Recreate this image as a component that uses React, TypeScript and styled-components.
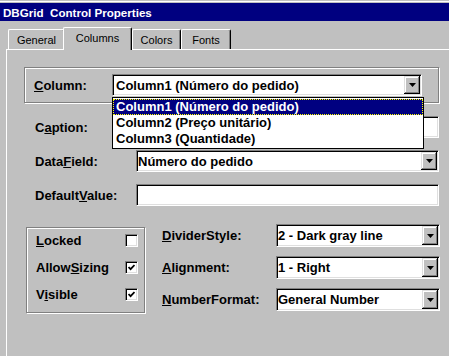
import React from 'react'
import styled, { createGlobalStyle, css } from 'styled-components'

const GlobalStyle = createGlobalStyle`
  html, body { margin: 0; padding: 0; background: #c0c0c0; }
  body { font-family: "Liberation Sans", Arial, sans-serif; color: #000; }
`

// classic 3D borders
const sunken = css`
  border: 1px solid;
  border-color: #808080 #ffffff #ffffff #808080;
  box-shadow: inset 1px 1px 0 #000000, inset -1px -1px 0 #dfdfdf;
`

const Window = styled.div`
  width: 449px;
  height: 356px;
  overflow: hidden;
  box-sizing: border-box;
  padding-top: 3px;
  display: flex;
  flex-direction: column;
  background: #c0c0c0;
  box-shadow: inset 0 1px 0 #c0c0c0, inset 0 2px 0 #ffffff;
`

const TitleBar = styled.div`
  height: 18px;
  flex-shrink: 0;
  display: flex;
  align-items: center;
  padding-left: 3px;
  background: #000080;
  color: #ffffff;
  font-weight: bold;
  font-size: 11.6px;
  white-space: pre;
`

const TabRow = styled.div`
  display: flex;
  align-items: flex-end;
  height: 22px;
  margin-top: 6px;
  padding-left: 8px;
  position: relative;
  z-index: 2;
  flex-shrink: 0;
`

const Tab = styled.div<{ $w: number; $active?: boolean }>`
  width: ${p => p.$w}px;
  height: 20px;
  box-sizing: border-box;
  display: flex;
  align-items: center;
  justify-content: center;
  font-size: 11px;
  border-top: 1px solid #ffffff;
  border-left: 1px solid #ffffff;
  border-right: 1px solid #000000;
  border-top-left-radius: 2px;
  border-top-right-radius: 2px;
  box-shadow: inset -1px 0 0 #808080;
  background: #c0c0c0;
  ${p =>
    p.$active &&
    css`
      height: 23px;
      margin-left: -2px;
      margin-bottom: -1px;
      padding-bottom: 3px;
      position: relative;
      z-index: 3;
    `}
`

const Panel = styled.div`
  flex: 1;
  width: 480px;
  margin-left: 6px;
  border-top: 1px solid #ffffff;
  border-left: 1px solid #ffffff;
  padding: 17px 0 0 17px;
`

const GroupBox = styled.div<{ $w: number; $h: number }>`
  width: ${p => p.$w}px;
  height: ${p => p.$h}px;
  box-sizing: border-box;
  border: 1px solid #808080;
  box-shadow: inset 1px 1px 0 #ffffff, 1px 1px 0 #ffffff;
`

const ColumnGroup = styled(GroupBox)`
  display: flex;
  align-items: center;
  padding-left: 9px;
`

const Label = styled.span<{ $w?: number }>`
  font-weight: bold;
  font-size: 13px;
  white-space: nowrap;
  ${p => p.$w && `width: ${p.$w}px; flex-shrink: 0;`}
`

const Key = styled.span`
  text-decoration: underline;
  text-underline-offset: 1px;
`

const Combo = styled.div<{ $w: number; $h?: number }>`
  position: relative;
  width: ${p => p.$w}px;
  height: ${p => p.$h ?? 22}px;
  box-sizing: border-box;
  ${sunken};
  background: #ffffff;
  display: flex;
  align-items: center;
  font-weight: bold;
  font-size: 13px;
`

const ComboText = styled.span<{ $pad?: number }>`
  flex: 1;
  padding-left: ${p => p.$pad ?? 1}px;
  white-space: nowrap;
  overflow: hidden;
`

const DropButton = styled.div`
  width: 16px;
  align-self: stretch;
  margin: 1px;
  display: flex;
  align-items: center;
  justify-content: center;
  background: #c0c0c0;
  box-shadow: inset -1px -1px 0 #000000, inset 1px 1px 0 #dfdfdf,
    inset -2px -2px 0 #808080, inset 2px 2px 0 #ffffff;
`

const TextBox = styled.div`
  height: 22px;
  box-sizing: border-box;
  ${sunken};
  background: #ffffff;
`

const DropList = styled.div`
  position: absolute;
  top: calc(100% + 2px);
  left: -1px;
  width: 312px;
  box-sizing: border-box;
  border: 1px solid #000000;
  background: #ffffff;
  padding: 1px 0;
  z-index: 10;
`

const ListItem = styled.div<{ $selected?: boolean }>`
  height: 16px;
  line-height: 16px;
  padding-left: 3px;
  font-weight: bold;
  font-size: 13px;
  white-space: nowrap;
  ${p =>
    p.$selected &&
    css`
      background: #000080;
      color: #ffffff;
      outline: 1px dotted #ffff00;
      outline-offset: -1px;
    `}
`

const FormGrid = styled.div`
  margin-top: 13px;
  padding-left: 11px;
  display: grid;
  grid-template-columns: 101px 303px;
  grid-auto-rows: 22px;
  row-gap: 12px;
  align-items: center;
`

const Bottom = styled.div`
  display: flex;
  align-items: flex-start;
  margin-top: 18px;
`

const CheckGroup = styled(GroupBox)`
  margin: 3px 0 0 2px;
  padding: 6px 0 0 9px;
  display: grid;
  grid-template-columns: 89px 13px;
  grid-auto-rows: 13px;
  row-gap: 14px;
  align-items: center;
`

const CheckBox = styled.div`
  width: 13px;
  height: 13px;
  box-sizing: border-box;
  ${sunken};
  background: #ffffff;
  display: flex;
  align-items: center;
  justify-content: center;
`

const OptionGrid = styled.div`
  margin-left: 17px;
  display: grid;
  grid-template-columns: 114px 164px;
  grid-auto-rows: 23px;
  row-gap: 9px;
  align-items: center;
`

const Arrow = () => (
  <svg width="7" height="4" viewBox="0 0 7 4">
    <polygon points="0,0 7,0 3.5,4" fill="#000" />
  </svg>
)

const Check = () => (
  <svg width="7" height="7" viewBox="0 0 7 7">
    <polyline points="0.5,3 2.6,5.2 6.5,1" fill="none" stroke="#000" strokeWidth="1.8" />
  </svg>
)

function DropDown({ value, w, h, pad, children }: { value: string; w: number; h?: number; pad?: number; children?: React.ReactNode }) {
  return (
    <Combo $w={w} $h={h}>
      <ComboText $pad={pad}>{value}</ComboText>
      <DropButton>
        <Arrow />
      </DropButton>
      {children}
    </Combo>
  )
}

const columns = ['Column1 (Número do pedido)', 'Column2 (Preço unitário)', 'Column3 (Quantidade)']

const flags = [
  { pre: '', key: 'L', post: 'ocked', on: false },
  { pre: 'Allow', key: 'S', post: 'izing', on: true },
  { pre: 'V', key: 'i', post: 'sible', on: true },
]

const options = [
  { key: 'D', post: 'ividerStyle:', value: '2 - Dark gray line' },
  { key: 'A', post: 'lignment:', value: '1 - Right' },
  { key: 'N', post: 'umberFormat:', value: 'General Number' },
]

export default function App() {
  return (
    <Window>
      <GlobalStyle />
      <TitleBar>{'DBGrid  Control Properties'}</TitleBar>
      <TabRow>
        <Tab $w={57}>General</Tab>
        <Tab $w={69} $active>Columns</Tab>
        <Tab $w={49}>Colors</Tab>
        <Tab $w={50}>Fonts</Tab>
      </TabRow>
      <Panel>
        <ColumnGroup $w={415} $h={36}>
          <Label $w={78}>
            <Key>C</Key>olumn:
          </Label>
          <DropDown value={columns[0]} w={310} pad={3}>
            <DropList>
              {columns.map((c, i) => (
                <ListItem key={c} $selected={i === 0}>
                  {c}
                </ListItem>
              ))}
            </DropList>
          </DropDown>
        </ColumnGroup>

        <FormGrid>
          <Label>
            C<Key>a</Key>ption:
          </Label>
          <TextBox />
          <Label>
            Data<Key>F</Key>ield:
          </Label>
          <DropDown value="Número do pedido" w={303} />
          <Label>
            Default<Key>V</Key>alue:
          </Label>
          <TextBox />
        </FormGrid>

        <Bottom>
          <CheckGroup $w={119} $h={86}>
            {flags.map(f => (
              <React.Fragment key={f.post}>
                <Label>
                  {f.pre}
                  <Key>{f.key}</Key>
                  {f.post}
                </Label>
                <CheckBox>{f.on && <Check />}</CheckBox>
              </React.Fragment>
            ))}
          </CheckGroup>
          <OptionGrid>
            {options.map(o => (
              <React.Fragment key={o.post}>
                <Label>
                  <Key>{o.key}</Key>
                  {o.post}
                </Label>
                <DropDown value={o.value} w={164} h={23} />
              </React.Fragment>
            ))}
          </OptionGrid>
        </Bottom>
      </Panel>
    </Window>
  )
}
